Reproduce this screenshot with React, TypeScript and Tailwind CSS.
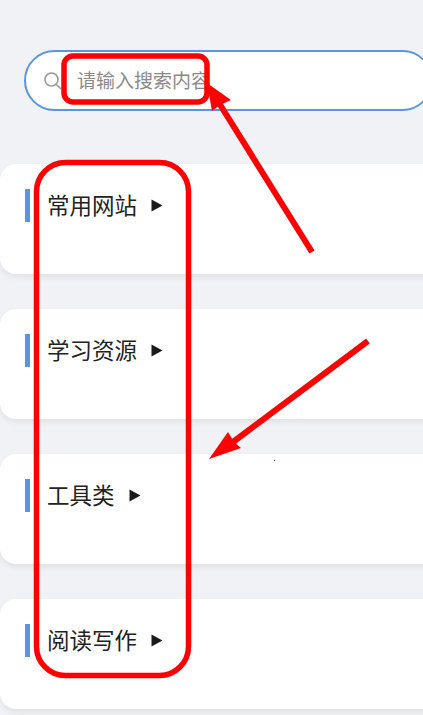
import React from 'react'

const categories = ['常用网站', '学习资源', '工具类', '阅读写作']

const App: React.FC = () => {
  return (
    <div className="relative h-[715px] w-[423px] overflow-hidden bg-[#f0f2f6] font-['Noto_Sans_CJK_SC',sans-serif]">
      <div className="pt-[50px] pl-6">
        <div className="flex h-[61px] w-[409px] items-center rounded-full border-2 border-[#5a96de] bg-white pl-[17px]">
          <svg width="20" height="20" viewBox="0 0 20 20" fill="none" stroke="#9a9a9a" strokeWidth="1.6" className="shrink-0">
            <circle cx="8.5" cy="8.5" r="6.5" />
            <path d="M13.2 13.2 L18 18" />
          </svg>
          <input
            className="ml-[14px] w-[300px] bg-transparent text-[19px] outline-none placeholder:text-[#8a8a8a]"
            placeholder="请输入搜索内容"
          />
        </div>
      </div>

      <div className="mt-[53px] flex w-[450px] flex-col gap-[35px]">
        {categories.map(name => (
          <div key={name} className="h-[110px] rounded-2xl bg-white pt-[25px] shadow-[0_3px_6px_rgba(0,0,0,0.07)]">
            <div className="ml-[25px] flex h-[33px] items-center border-l-[5px] border-[#5a96de] pl-[17px]">
              <span className="pb-[3px] text-[22.5px] leading-none text-[#222]">{name}</span>
              <svg width="12" height="13" viewBox="0 0 12 13" className="ml-[14px]" fill="#1a1a1a">
                <path d="M0.5 0.5 L11.5 6.5 L0.5 12.5 Z" />
              </svg>
            </div>
          </div>
        ))}
      </div>

      {/* red annotations on top of the page */}
      <svg className="absolute top-0 left-0" width="423" height="715" viewBox="0 0 423 715" fill="none">
        <rect x="64" y="56" width="143" height="46" rx="9" stroke="#fe0000" strokeWidth="5.5" />
        <rect x="36.5" y="162.5" width="152" height="513" rx="29" stroke="#fe0000" strokeWidth="5.5" />
        <path d="M312 252 L219 103" stroke="#fe0000" strokeWidth="6" />
        <path d="M207 83 L231 100 L220 105 L212 111 Z" fill="#fe0000" />
        <path d="M368 341 L233 442" stroke="#fe0000" strokeWidth="6" />
        <path d="M209 459 L228 432 L234 442 L241 448 Z" fill="#fe0000" />
        <rect x="274" y="460" width="1" height="1" fill="#444" />
      </svg>
    </div>
  )
}

export default App
